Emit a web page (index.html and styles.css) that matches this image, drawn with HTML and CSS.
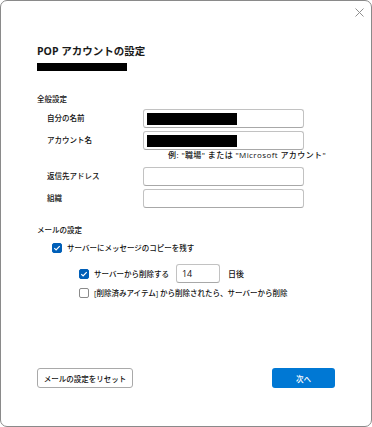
FILE: index.html
```html
<!DOCTYPE html>
<html lang="ja">
<head>
    <meta charset="UTF-8">
    <meta name="viewport" content="width=device-width, initial-scale=1.0">
    <title>POP アカウントの設定</title>
    <link rel="stylesheet" href="styles.css">
</head>
<body>
    <div class="dialog">
        <button class="close-button" aria-label="閉じる">
            <svg width="9" height="9" viewBox="0 0 9 9"><path d="M0.5 0.5 L8.5 8.5 M8.5 0.5 L0.5 8.5" stroke="#8f8f8f" stroke-width="1" fill="none"/></svg>
        </button>

        <h1 class="title">POP アカウントの設定</h1>
        <div class="redact subtitle"></div>

        <h2 class="group-title">全般設定</h2>
        <div class="form-grid">
            <label>自分の名前</label>
            <div class="field"><span class="redact"></span></div>

            <label>アカウント名</label>
            <div class="field"><span class="redact"></span></div>

            <div class="hint">例: "職場" または "Microsoft アカウント"</div>

            <label>返信先アドレス</label>
            <div class="field"></div>

            <label>組織</label>
            <div class="field"></div>
        </div>

        <h2 class="group-title mail-title">メールの設定</h2>
        <div class="check-row level-1">
            <span class="checkbox checked"></span>
            <span>サーバーにメッセージのコピーを残す</span>
        </div>
        <div class="check-row level-2 days-row">
            <span class="checkbox checked"></span>
            <span>サーバーから削除する</span>
            <div class="field days">14</div>
            <span class="days-unit">日後</span>
        </div>
        <div class="check-row level-2 last-row">
            <span class="checkbox"></span>
            <span>[削除済みアイテム] から削除されたら、サーバーから削除</span>
        </div>

        <div class="footer">
            <button class="reset-button">メールの設定をリセット</button>
            <button class="next-button">次へ</button>
        </div>
    </div>
</body>
</html>
```

FILE: styles.css
```css
* {
    margin: 0;
    padding: 0;
    box-sizing: border-box;
}

body {
    background-color: #ffffff;
    font-family: "Open Sans", "Noto Sans CJK JP", sans-serif;
    font-size: 7.5px;
    font-weight: 500;
    color: #111111;
}

.dialog {
    position: relative;
    display: flex;
    flex-direction: column;
    width: 372px;
    height: 427px;
    padding: 0 36px;
    background-color: #ffffff;
    border: 1px solid #8a8a8a;
    border-radius: 7px;
}

.close-button {
    position: absolute;
    top: 7px;
    right: 7px;
    width: 9px;
    height: 9px;
    border: none;
    background: none;
    display: flex;
}

.title {
    margin-top: 43px;
    font-size: 10.5px;
    line-height: 14px;
    font-weight: 700;
    color: #1a1a1a;
}

.redact {
    display: block;
    width: 90px;
    height: 12px;
    background-color: #000000;
}

.subtitle {
    height: 8px;
    margin-top: 5px;
}

.group-title {
    margin-top: 22px;
    font-size: 7.5px;
    line-height: 12px;
    font-weight: 500;
}

/* label column + input column */
.form-grid {
    display: grid;
    grid-template-columns: 96px 161px;
    row-gap: 3px;
    align-items: center;
    margin-top: 4px;
    padding-left: 10px;
}

.form-grid label {
    line-height: 12px;
    margin-top: -2px;
}

.field {
    display: flex;
    align-items: center;
    height: 19px;
    padding-left: 3px;
    border: 1px solid #c2c2c2;
    border-bottom-color: #a8a8a8;
    border-radius: 3px;
}

.hint {
    grid-column: 2;
    justify-self: start;
    margin: -4px 0 4px 25px;
    font-size: 8px;
    letter-spacing: 0.4px;
    line-height: 11px;
    white-space: nowrap;
}

.mail-title {
    margin-top: 16px;
}

.check-row {
    display: flex;
    align-items: center;
    gap: 5px;
    line-height: 14px;
    white-space: nowrap;
}

.level-1 {
    margin-top: 5px;
    padding-left: 15px;
}

.level-2 {
    padding-left: 42px;
}

.days-row {
    margin-top: 9px;
}

.last-row {
    margin-top: 3px;
}

.checkbox {
    flex: none;
    width: 10px;
    height: 10px;
    border: 1px solid #8a8a8a;
    border-radius: 2px;
    background-color: #ffffff;
}

.checkbox.checked {
    border-color: #005fb8;
    background-color: #005fb8;
    background-image: url("data:image/svg+xml,%3Csvg xmlns='http://www.w3.org/2000/svg' viewBox='0 0 10 10'%3E%3Cpath d='M2.3 5.2 L4.1 7 L7.7 3.2' stroke='white' stroke-width='1.2' fill='none'/%3E%3C/svg%3E");
    background-size: 10px 10px;
    background-position: center;
}

.days {
    width: 44px;
    margin-left: 2px;
    padding-left: 5px;
    font-size: 9px;
}

.days-unit {
    margin-left: 3px;
    font-size: 8px;
}

.footer {
    display: flex;
    justify-content: space-between;
    margin-top: auto;
    margin-bottom: 38px;
}

.reset-button,
.next-button {
    height: 20px;
    font-family: inherit;
    font-size: 7.5px;
    font-weight: 500;
    border-radius: 3px;
    cursor: pointer;
}

.reset-button {
    width: 96px;
    background-color: #ffffff;
    color: #111111;
    border: 1px solid #a9a9a9;
}

.next-button {
    width: 63px;
    background-color: #0078d4;
    color: #ffffff;
    border: none;
}
```
